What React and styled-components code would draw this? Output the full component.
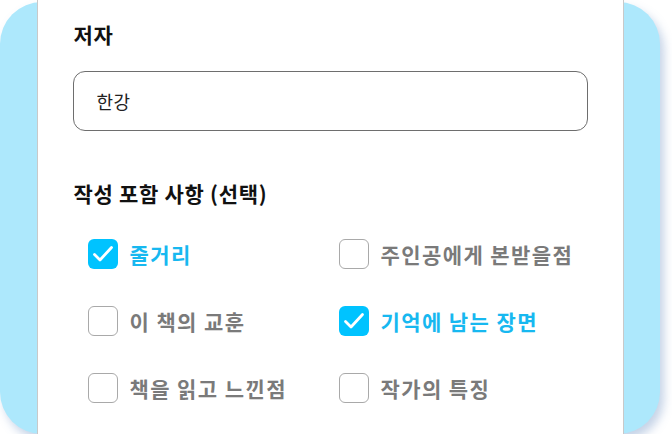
import styled, { createGlobalStyle } from "styled-components";

const GlobalStyle = createGlobalStyle`
    html, body {
        margin: 0;
        padding: 0;
        background: #fff;
        font-family: "Noto Sans CJK KR", "Noto Sans", sans-serif;
        overflow: hidden;
    }
`;

const Frame = styled.div`
    margin-top: 2px;
    width: 660px;
    height: 432px;
    background: #ade8fc;
    border-radius: 42px;
    box-shadow: 4px 6px 10px rgba(90, 130, 185, 0.35);
    display: flex;
    justify-content: center;
`;

const Panel = styled.div`
    margin-top: -8px;
    width: 587px;
    height: 440px;
    box-sizing: border-box;
    background: #fff;
    border-left: 1px solid #c9c9c9;
    border-right: 1px solid #c9c9c9;
    padding: 25px 35px 0 35px;
    display: flex;
    flex-direction: column;
`;

const Label = styled.div`
    font-size: 21px;
    font-weight: 700;
    line-height: 30px;
    letter-spacing: 0.7px;
    color: #111;
    margin-left: 1px;
`;

const Input = styled.div`
    margin-top: 22px;
    height: 60px;
    border: 1.5px solid #6e6e6e;
    border-radius: 12px;
    box-sizing: border-box;
    display: flex;
    align-items: center;
    padding-left: 23px;
    font-size: 18px;
    letter-spacing: 0.5px;
    color: #222;
`;

const Section = styled(Label)`
    margin-top: 47px;
`;

const Options = styled.div`
    margin-top: 31px;
    padding-left: 15px;
    display: grid;
    grid-template-columns: 251px 1fr;
    row-gap: 37px;
`;

const Option = styled.div`
    display: flex;
    align-items: center;
    gap: 12px;
    height: 30px;
    font-size: 21px;
    font-weight: 600;
    letter-spacing: 1.4px;
    color: ${props => props.checked ? "#17b8f0" : "#7a7a7a"};
`;

const Box = styled.div`
    flex: none;
    width: 30px;
    height: 30px;
    box-sizing: border-box;
    border-radius: 6px;
    ${props => props.checked ? `
        background: #00c3ff;
    ` : `
        border: 1.5px solid #a9a9a9;
        background: #fff;
    `}
    display: flex;
    align-items: center;
    justify-content: center;
`;

const options = [
    { text: "줄거리", checked: true },
    { text: "주인공에게 본받을점", checked: false },
    { text: "이 책의 교훈", checked: false },
    { text: "기억에 남는 장면", checked: true },
    { text: "책을 읽고 느낀점", checked: false },
    { text: "작가의 특징", checked: false },
];

function Check() {
    return (
        <svg width="24" height="24" viewBox="0 0 24 24" fill="none">
            <polyline points="3.5,12.5 9,18 20.5,5.5" stroke="#fff" strokeWidth="2.8" strokeLinecap="round" strokeLinejoin="round" />
        </svg>
    );
}

export default function App() {
    return (
        <>
            <GlobalStyle />
            <Frame>
                <Panel>
                    <Label>저자</Label>
                    <Input>한강</Input>
                    <Section>작성 포함 사항 (선택)</Section>
                    <Options>
                        {options.map(option => (
                            <Option key={option.text} checked={option.checked}>
                                <Box checked={option.checked}>
                                    {option.checked && <Check />}
                                </Box>
                                {option.text}
                            </Option>
                        ))}
                    </Options>
                </Panel>
            </Frame>
        </>
    );
}
